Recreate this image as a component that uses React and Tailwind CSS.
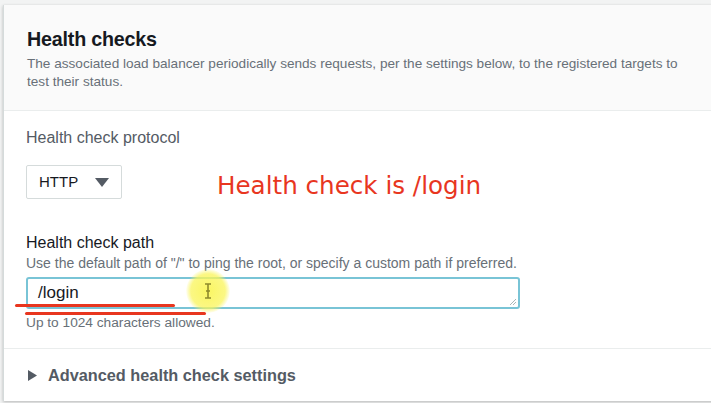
import React from 'react';

const HealthChecks = () => {
    return (
        <div className="w-[711px] h-[403px] overflow-hidden bg-[#f2f3f3] pt-[5px] pl-[3px]" style={{ fontFamily: '"Liberation Sans", Arial, sans-serif' }}>
            <div className="w-[760px] bg-white border-l border-[#d5dbdb] shadow-[0_1px_3px_rgba(0,0,0,0.25)]">
                {/* Header */}
                <div className="bg-[#fafafa] border-b border-[#eaeded] pl-[23px] pt-[22px] h-[106px]">
                    <h2 className="text-[19.7px] font-bold text-[#16191f] leading-[24px] tracking-[-0.2px]">Health checks</h2>
                    <p className="mt-[4px] text-[13.6px] leading-[18px] text-[#687078] w-[668px]">
                        The associated load balancer periodically sends requests, per the settings below, to the registered targets to test their status.
                    </p>
                </div>

                {/* Body */}
                <div className="relative pl-[22px] pt-[17px] pb-[17px] border-b border-[#eaeded]">
                    <div className="text-[16px] leading-[20px] text-[#545b64]">Health check protocol</div>
                    <div className="mt-[17px] flex items-center h-[34px]">
                        <div className="w-[96px] h-[34px] border border-[#d5dbdb] rounded-[2px] flex items-center pl-[12px] text-[15px] text-[#16191f]">
                            <span>HTTP</span>
                            <svg className="ml-[17px]" width="14" height="9" viewBox="0 0 14 9">
                                <path d="M0 0 H14 L7 9 Z" fill="#545b64" />
                            </svg>
                        </div>
                        <span className="ml-[95px] translate-y-[4px] text-[24.6px] whitespace-nowrap text-[#e8361f]" style={{ fontFamily: '"DejaVu Sans", Verdana, sans-serif' }}>
                            Health check is /login
                        </span>
                    </div>

                    <div className="mt-[34px] text-[16px] leading-[20px] text-[#16191f]">Health check path</div>
                    <div className="text-[14px] leading-[18px] text-[#687078] mt-[1px]">
                        Use the default path of "/" to ping the root, or specify a custom path if preferred.
                    </div>
                    <div className="relative mt-[5px] w-[494px] h-[32px] border-2 border-[#79c4d6] rounded-[3px] flex items-center pl-[10px] text-[17px] text-[#16191f]">
                        /login
                        <svg className="absolute right-[2px] bottom-[2px]" width="7" height="7" viewBox="0 0 7 7">
                            <path d="M1 7 L7 1 M4 7 L7 4" stroke="#aab7b8" strokeWidth="1" />
                        </svg>
                        {/* cursor highlight */}
                        <div className="absolute left-[158px] top-[-10px] w-[44px] h-[44px] rounded-full bg-[radial-gradient(circle,rgba(250,245,90,0.95)_0%,rgba(250,245,90,0.75)_55%,rgba(250,245,90,0)_72%)]" />
                        <svg className="absolute left-[176px] top-[4px]" width="8" height="16" viewBox="0 0 8 16">
                            <path d="M1 1 H7 M4 1 V15 M1 15 H7 M2 8 H6" stroke="#8f8a2c" strokeWidth="1.6" fill="none" />
                        </svg>
                    </div>
                    {/* red underline annotation */}
                    <div className="absolute left-[11px] top-[193px] w-[160px] h-[3px] bg-[#e8361f] rounded-full" />
                    <div className="absolute left-[21px] top-[201px] w-[181px] h-[3px] bg-[#e8361f] rounded-full" />
                    <div className="mt-[5px] text-[13.7px] leading-[17px] text-[#687078]">Up to 1024 characters allowed.</div>
                </div>

                {/* Advanced */}
                <div className="flex items-center pl-[24px] h-[52px]">
                    <svg width="9" height="11" viewBox="0 0 9 11">
                        <path d="M0 0 L9 5.5 L0 11 Z" fill="#545b64" />
                    </svg>
                    <span className="ml-[11px] text-[16.3px] font-bold text-[#545b64]">Advanced health check settings</span>
                </div>
            </div>
        </div>
    );
};

export default function App() {
    return <HealthChecks />;
}
